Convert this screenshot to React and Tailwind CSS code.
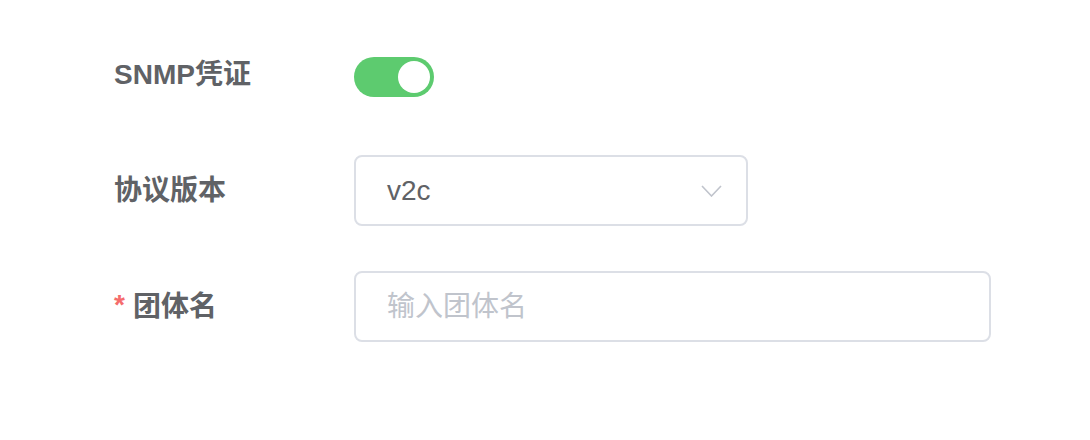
import {useState} from 'react';

const font = {fontFamily: '"Liberation Sans", "Noto Sans CJK SC", sans-serif'};

function Toggle({on, onChange}) {
    return (
        <button
            onClick={() => onChange(!on)}
            className={`relative w-[80px] h-[40px] rounded-full transition-colors ${on ? 'bg-[#5dcb6f]' : 'bg-[#dcdfe6]'}`}
        >
            <span className={`absolute top-[4px] w-[32px] h-[32px] rounded-full bg-white transition-all ${on ? 'left-[44px]' : 'left-[4px]'}`} />
        </button>
    );
}

export default function App() {
    const [snmp, setSnmp] = useState(true);
    const [community, setCommunity] = useState('');

    return (
        <div className="w-[1090px] h-[440px] bg-white pl-[114px] pt-[57px]" style={font}>
            {/* SNMP凭证 */}
            <div className="flex items-center h-[40px]">
                <label className="w-[240px] text-[28px] font-bold text-[#606266] leading-none -mt-[4px]">SNMP凭证</label>
                <Toggle on={snmp} onChange={setSnmp} />
            </div>

            {/* 协议版本 */}
            <div className="flex items-center h-[71px] mt-[58px]">
                <label className="w-[240px] text-[28px] font-bold text-[#606266] leading-none">协议版本</label>
                <div className="flex items-center justify-between w-[394px] h-[71px] rounded-[8px] border-2 border-[#dcdfe6] pl-[31px] pr-[24px]">
                    <span className="text-[28px] text-[#606266] leading-none">v2c</span>
                    <svg width="21" height="12" viewBox="0 0 21 12" fill="none">
                        <path d="M1 1l9.5 10L20 1" stroke="#c0c4cc" strokeWidth="1.6" />
                    </svg>
                </div>
            </div>

            {/* 团体名 */}
            <div className="flex items-center h-[71px] mt-[45px]">
                <label className="w-[240px] flex items-center text-[28px] font-bold text-[#606266] leading-none">
                    <span className="text-[#f56c6c] mr-[8px] -mt-[4px]">*</span>
                    团体名
                </label>
                <input
                    value={community}
                    onChange={(e) => setCommunity(e.target.value)}
                    placeholder="输入团体名"
                    className="w-[637px] h-[71px] rounded-[8px] border-2 border-[#dcdfe6] pl-[31px] text-[28px] text-[#606266] placeholder:text-[#c0c4cc] outline-none"
                    style={font}
                />
            </div>
        </div>
    );
}
